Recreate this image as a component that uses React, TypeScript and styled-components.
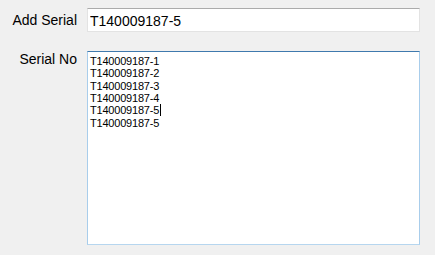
import styled, { createGlobalStyle } from "styled-components";

const serials = [
    "T140009187-1",
    "T140009187-2",
    "T140009187-3",
    "T140009187-4",
    "T140009187-5",
    "T140009187-5",
];

// 캐럿은 5번째 줄 뒤에 표시
const caretLine = 4;

const App = () => {
    return (
        <>
            <GlobalStyle />
            <Form>
                <Label offset={4}>Add Serial</Label>
                <SerialInput value="T140009187-5" readOnly />
                <Label offset={0}>Serial No</Label>
                <SerialList>
                    {serials.map((serial, index) => (
                        <SerialLine key={index}>
                            {serial}
                            {index === caretLine && <Caret />}
                        </SerialLine>
                    ))}
                </SerialList>
            </Form>
        </>
    );
};

export default App;

// Styled Components
const GlobalStyle = createGlobalStyle`
    html, body {
        margin: 0;
        padding: 0;
        background: #f0f0f0;
    }
    body {
        font-family: "Liberation Sans", Arial, sans-serif;
        color: #000;
    }
`;

const Form = styled.div`
    display: grid;
    grid-template-columns: 77px 333px;
    align-content: start;
    column-gap: 10px;
    row-gap: 19px;
    padding-top: 8px;
    width: 435px;
    height: 255px;
    box-sizing: border-box;
`;

const Label = styled.label<{ offset: number }>`
    justify-self: end;
    align-self: start;
    padding-top: ${({ offset }) => offset}px;
    font-size: 14px;
    line-height: 16px;
    white-space: nowrap;
`;

const SerialInput = styled.input`
    box-sizing: border-box;
    width: 333px;
    height: 24px;
    margin: 0;
    padding: 2px 2px 0;
    font-family: "Liberation Sans", Arial, sans-serif;
    font-size: 14px;
    color: #000;
    background: #fff;
    border: 1px solid #e3e3e3;
    border-top-color: #ababab;
    border-radius: 0;
    outline: none;
`;

const SerialList = styled.div`
    box-sizing: border-box;
    width: 333px;
    height: 194px;
    padding: 3px 2px 0;
    background: #fff;
    border: 1px solid #a8cdeb;
    border-top-color: #3f79ad;
    border-bottom-color: #b6d6ef;
    font-size: 11px;
    line-height: 12.35px;
    letter-spacing: -0.2px;
`;

const SerialLine = styled.div`
    white-space: nowrap;
`;

const Caret = styled.span`
    display: inline-block;
    width: 1px;
    height: 12px;
    margin-left: 1px;
    vertical-align: -2px;
    background: #000;
`;
